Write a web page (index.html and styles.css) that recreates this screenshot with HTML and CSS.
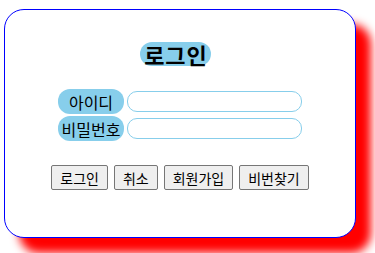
FILE: index.html
```html
<!DOCTYPE html>
<html lang="ko">
<head>
    <meta charset="UTF-8">
    <title>로그인</title>
    <link rel="stylesheet" href="styles.css">
</head>
<body>
    <div class="login-box">
        <h1 class="title"><span>로그인</span></h1>

        <table class="login-form">
            <tr>
                <th><label for="userId">아이디</label></th>
                <td><input type="text" id="userId"></td>
            </tr>
            <tr>
                <th><label for="userPw">비밀번호</label></th>
                <td><input type="password" id="userPw"></td>
            </tr>
        </table>

        <div class="buttons">
            <button type="button">로그인</button>
            <button type="button">취소</button>
            <button type="button">회원가입</button>
            <button type="button">비번찾기</button>
        </div>
    </div>
</body>
</html>
```

FILE: styles.css
```css
* {
    margin: 0;
    padding: 0;
    box-sizing: border-box;
}

html, body {
    height: 100%;
}

body {
    font-family: "Noto Sans CJK KR", "Noto Sans", sans-serif;
    background-color: #fff;
    padding: 9px 0 0 4px;
    overflow: hidden;
}

.login-box {
    width: 352px;
    height: 229px;
    border: 1px solid blue;
    border-radius: 20px;
    box-shadow: 15px 15px 10px red;
    background-color: #fff;
    display: flex;
    flex-direction: column;
    align-items: center;
    padding-top: 32px;
}

.title {
    font-size: 22px;
    line-height: 24px;
    letter-spacing: 1px;
    margin-left: -9px;
}

.title span {
    background-color: skyblue;
    border-radius: 12px;
    padding: 0 3px 0 4px;
    display: inline-block;
}

.login-form {
    margin-top: 21px;
    border-spacing: 3px 2px;
}

.login-form th {
    background-color: skyblue;
    border-radius: 12px;
    font-size: 16px;
    font-weight: normal;
    line-height: 24px;
    height: 25px;
    width: 66px;
    text-align: center;
    white-space: nowrap;
}

.login-form input {
    width: 175px;
    height: 21px;
    border: 1px solid skyblue;
    border-radius: 10px;
    outline: none;
    display: block;
}

.buttons {
    margin-top: 22px;
    display: flex;
    gap: 6px;
}

.buttons button {
    font-family: inherit;
    font-size: 14px;
    height: 25px;
    padding: 0 8px;
    border: 1px solid #767676;
    border-radius: 2px;
    background-color: #efefef;
}
```
